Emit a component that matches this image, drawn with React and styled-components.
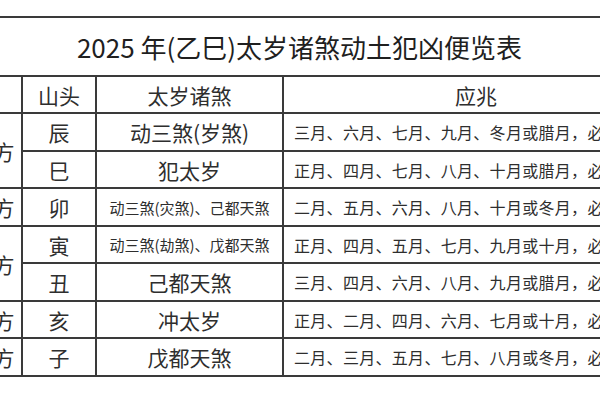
import React from 'react';
import styled, { createGlobalStyle } from 'styled-components';

const GlobalStyle = createGlobalStyle`
  html, body {
    margin: 0;
    padding: 0;
    background: #fff;
  }
  body {
    font-family: "Noto Sans CJK SC", "Noto Sans", sans-serif;
    color: #2e2e2e;
  }
`;

const Page = styled.div`
  width: 600px;
  height: 400px;
  overflow: hidden;
  background: #fff;
  padding-top: 16px;
  box-sizing: border-box;
`;

const Grid = styled.div`
  display: grid;
  grid-template-columns: 76px 72px 185px 384px;
  grid-template-rows: 57px 35px 36px 35px 36px 35px 36px 35px 36px;
  gap: 2px;
  padding: 2px 0 2px 2px;
  margin-left: -57px;
  width: max-content;
  background: #3a3a3a;
`;

const Cell = styled.div`
  background: #fff;
  display: flex;
  align-items: center;
  justify-content: ${(p) => (p.$left ? 'flex-start' : 'center')};
  padding-left: ${(p) => (p.$left ? '10px' : '0')};
  font-size: ${(p) => p.$size || 21}px;
  letter-spacing: ${(p) => p.$spacing || 0}px;
  white-space: nowrap;
  overflow: hidden;
  grid-row: ${(p) => p.$row || 'auto'};
  grid-column: ${(p) => p.$col || 'auto'};
  color: #2e2e2e;
`;

const Title = styled(Cell)`
  grid-column: 1 / -1;
  font-size: 26px;
  color: #1f1f1f;
  padding-right: 14px;
`;

const rows = [
  { branch: '辰', sha: '动三煞(岁煞)', months: '三月、六月、七月、九月、冬月或腊月，必有灾殃' },
  { branch: '巳', sha: '犯太岁', months: '正月、四月、七月、八月、十月或腊月，必有灾殃' },
  { branch: '卯', sha: '动三煞(灾煞)、己都天煞', small: true, months: '二月、五月、六月、八月、十月或冬月，必有灾殃' },
  { branch: '寅', sha: '动三煞(劫煞)、戊都天煞', small: true, months: '正月、四月、五月、七月、九月或十月，必有灾殃' },
  { branch: '丑', sha: '己都天煞', months: '三月、四月、六月、八月、九月或腊月，必有灾殃' },
  { branch: '亥', sha: '冲太岁', months: '正月、二月、四月、六月、七月或十月，必有灾殃' },
  { branch: '子', sha: '戊都天煞', months: '二月、三月、五月、七月、八月或冬月，必有灾殃' },
];

const directions = [
  { text: '东南方', row: '3 / span 2' },
  { text: '正东方', row: '5 / span 1' },
  { text: '东北方', row: '6 / span 2' },
  { text: '西北方', row: '8 / span 1' },
  { text: '正北方', row: '9 / span 1' },
];

export default function App() {
  return (
    <>
      <GlobalStyle />
      <Page>
        <Grid>
          <Title>2025 年(乙巳)太岁诸煞动土犯凶便览表</Title>

          <Cell $row={2} $col={1} />
          <Cell $row={2} $col={2}>山头</Cell>
          <Cell $row={2} $col={3}>太岁诸煞</Cell>
          <Cell $row={2} $col={4}>应兆</Cell>

          {directions.map((d) => (
            <Cell key={d.text} $row={d.row} $col={1}>{d.text}</Cell>
          ))}

          {rows.map((r, i) => (
            <React.Fragment key={r.branch}>
              <Cell $row={i + 3} $col={2}>{r.branch}</Cell>
              <Cell $row={i + 3} $col={3} $size={r.small ? 15 : 21}>{r.sha}</Cell>
              <Cell $row={i + 3} $col={4} $left $size={16} $spacing={0.3}>{r.months}</Cell>
            </React.Fragment>
          ))}
        </Grid>
      </Page>
    </>
  );
}
